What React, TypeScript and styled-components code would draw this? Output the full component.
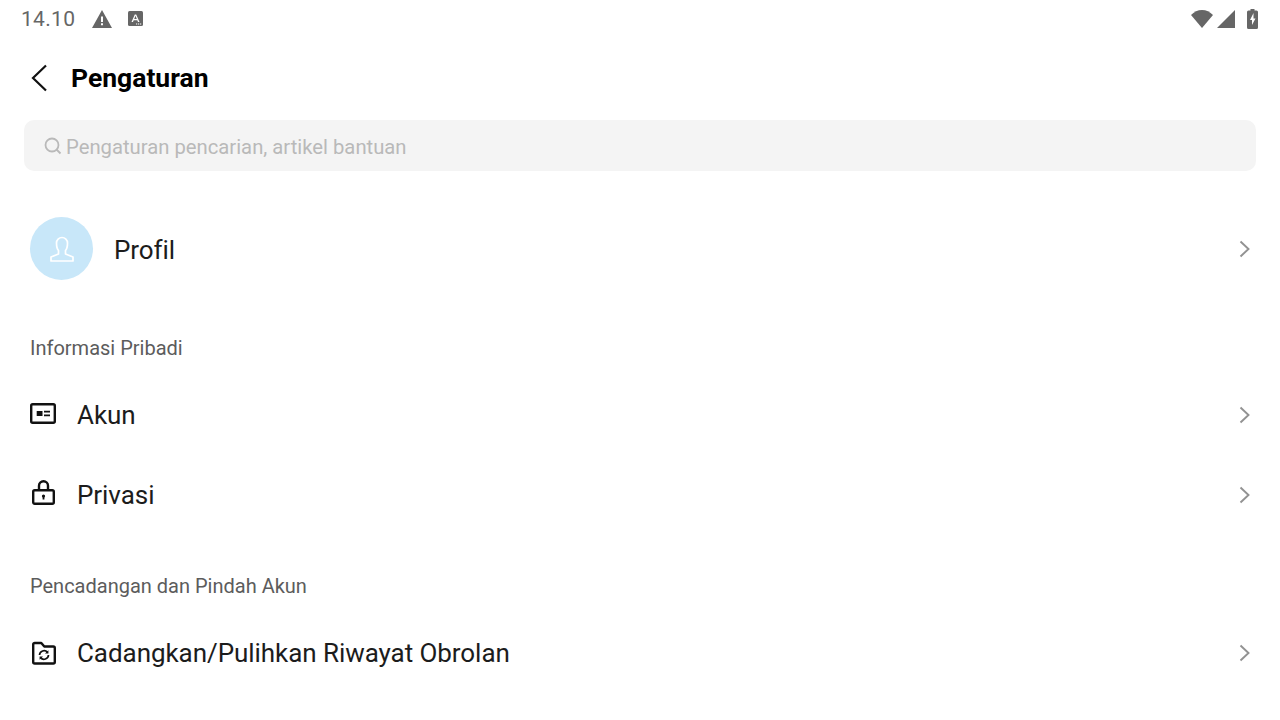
import React from 'react';
import styled, { createGlobalStyle } from 'styled-components';

const GlobalStyle = createGlobalStyle`
  html, body {
    margin: 0;
    padding: 0;
    background: #fff;
    overflow: hidden;
  }
  body {
    font-family: Roboto, "Liberation Sans", sans-serif;
  }
`;

const Page = styled.div`
  width: 1280px;
  height: 720px;
  overflow: hidden;
  display: flex;
  flex-direction: column;
`;

const StatusBar = styled.div`
  height: 37px;
  padding: 0 22px 0 21px;
  display: flex;
  align-items: center;
  justify-content: space-between;
  color: #666;
`;

const StatusGroup = styled.div`
  display: flex;
  align-items: center;
`;

const StatusIcon = styled.svg<{ $gap?: number }>`
  display: block;
  flex: none;
  margin-right: ${(p) => p.$gap ?? 0}px;
`;

const Time = styled.span`
  font-size: 21px;
  letter-spacing: 0.3px;
  margin-right: 17px;
`;

const Header = styled.div`
  height: 83px;
  padding: 0 0 2px 30px;
  box-sizing: border-box;
  display: flex;
  align-items: center;
`;

const BackButton = styled.button`
  width: 41px;
  height: 32px;
  padding: 0;
  border: 0;
  background: none;
  display: flex;
  align-items: center;
`;

const Title = styled.h1`
  margin: 0;
  font-size: 26.5px;
  font-weight: 700;
  color: #000;
`;

const SearchBox = styled.div`
  height: 51px;
  margin: 0 24px;
  padding-left: 20px;
  border-radius: 10px;
  background: #f4f4f4;
  display: flex;
  align-items: center;
  gap: 4px;
  color: #b9b9b9;
  font-size: 20.25px;
`;

const SearchText = styled.span`
  position: relative;
  top: 1px;
`;

const ProfileRow = styled.div`
  height: 63px;
  margin-top: 46px;
  padding: 0 29px 0 30px;
  display: flex;
  align-items: center;
`;

const Avatar = styled.div`
  width: 63px;
  height: 63px;
  border-radius: 50%;
  background: #c8e7f9;
  display: flex;
  align-items: center;
  justify-content: center;
  margin-right: 21px;
`;

const SectionLabel = styled.div<{ $top: number }>`
  margin-top: ${(p) => p.$top}px;
  padding-left: 30px;
  height: 24px;
  line-height: 24px;
  font-size: 20px;
  color: #5c5c5c;
`;

const Row = styled.div<{ $top?: number }>`
  height: 80px;
  margin-top: ${(p) => p.$top ?? 0}px;
  padding: 0 29px 0 30px;
  display: flex;
  align-items: center;
`;

const RowIcon = styled.div`
  width: 47px;
  height: 26px;
  flex: none;
  display: flex;
  align-items: center;
`;

const RowLabel = styled.span`
  flex: 1;
  font-size: 26px;
  letter-spacing: -0.06px;
  color: #1c1c1c;
`;

const ProfileLabel = styled(RowLabel)`
  padding-top: 2px;
`;

const Chevron = () => (
  <svg width="12" height="18" viewBox="0 0 12 18" fill="none" stroke="#929292" strokeWidth="1.9">
    <path d="M1.500 1.500 9.500 9l-8 7.500" />
  </svg>
);

const AccountIcon = () => (
  <svg width="26" height="24" viewBox="0 0 26 24" fill="none">
    <rect x="1.200" y="1.200" width="23.600" height="18.600" rx="1.500" stroke="#111" strokeWidth="2.400" />
    <rect x="6.700" y="8" width="5.800" height="5" fill="#111" />
    <path d="M14 8.700h6M14 12.300h6" stroke="#111" strokeWidth="1.800" />
  </svg>
);

const LockIcon = () => (
  <svg width="26" height="30" viewBox="0 0 26 30" fill="none">
    <rect x="3.200" y="10.200" width="20.600" height="13.600" rx="1.500" stroke="#111" strokeWidth="2.400" />
    <path d="M9 10V5.700a4.500 4.500 0 0 1 9 0V10" stroke="#111" strokeWidth="2.400" />
    <path d="M13.500 15.500v4" stroke="#111" strokeWidth="1.800" />
    <circle cx="13.500" cy="16" r="1.600" fill="#111" />
  </svg>
);

const BackupIcon = () => (
  <svg width="27" height="24" viewBox="0 0 27 24" fill="none">
    <path
      d="M3.200 3.500a1.500 1.500 0 0 1 1.500-1.500h6.600l3 3.500h9a1.500 1.500 0 0 1 1.500 1.500v14a1.500 1.500 0 0 1-1.500 1.500H4.700a1.500 1.500 0 0 1-1.500-1.500z"
      stroke="#111"
      strokeWidth="2.400"
      strokeLinejoin="round"
    />
    <path d="M9.500 14a4.500 4.500 0 0 1 8-2.600M18.500 14a4.500 4.500 0 0 1-8 2.600" stroke="#111" strokeWidth="1.700" />
    <path d="M18.400 9.200v3.400H15zM9.600 18.800v-3.400H13z" fill="#111" />
  </svg>
);

const rows = {
  personal: [
    { label: 'Akun', icon: <AccountIcon /> },
    { label: 'Privasi', icon: <LockIcon /> },
  ],
  backup: [{ label: 'Cadangkan/Pulihkan Riwayat Obrolan', icon: <BackupIcon /> }],
};

export default function App() {
  return (
    <Page>
      <GlobalStyle />
      <StatusBar>
        <StatusGroup>
          <Time>14.10</Time>
          <StatusIcon $gap={16} width="20" height="18" viewBox="0 0 20 18">
            <path fillRule="evenodd" d="M10 0 20 18H0zM9 6.500v5.500h2V6.500zM9 13.200v2h2v-2z" fill="#666" />
          </StatusIcon>
          <StatusIcon width="15" height="15" viewBox="0 0 15 15">
            <rect width="15" height="15" rx="1.500" fill="#666" />
            <path d="M3.500 11 6.800 3.500h1.400l3.300 7.500H10l-.7-1.800H5.700L5 11zM6.200 7.900h2.600L7.500 4.800z" fill="#fff" />
            <path d="M8 12.500h1.200v1H8zM10 12.500h1.200v1H10zM12 12.500h1.200v1H12z" fill="#fff" />
          </StatusIcon>
        </StatusGroup>
        <StatusGroup>
          <StatusIcon $gap={4} width="22" height="18" viewBox="0 0 22 18">
            <path d="M0 5C3 1.900 6.800 0 11 0s8 1.900 11 5L11 18z" fill="#666" />
          </StatusIcon>
          <StatusIcon $gap={12} width="18" height="18" viewBox="0 0 18 18">
            <path d="M18 0v18H0z" fill="#666" />
          </StatusIcon>
          <StatusIcon width="11" height="20" viewBox="0 0 11 20">
            <path
              fillRule="evenodd"
              d="M3.500 0h4v1.500h2A1.500 1.500 0 0 1 11 3v15.500a1.500 1.500 0 0 1-1.500 1.500h-8A1.500 1.500 0 0 1 0 18.500V3a1.500 1.500 0 0 1 1.500-1.500h2zM6.500 4 3 11h2v5l3.500-6.500h-2z"
              fill="#666"
            />
          </StatusIcon>
        </StatusGroup>
      </StatusBar>

      <Header>
        <BackButton>
          <svg width="18" height="28" viewBox="0 0 18 28" fill="none" stroke="#111" strokeWidth="2.200">
            <path d="M16 1.500 3 14l13 12.500" />
          </svg>
        </BackButton>
        <Title>Pengaturan</Title>
      </Header>

      <SearchBox>
        <svg width="18" height="18" viewBox="0 0 18 18" fill="none" stroke="#b9b9b9" strokeWidth="1.800">
          <circle cx="8" cy="8" r="6.500" />
          <path d="m12.500 12.500 4 4" />
        </svg>
        <SearchText>Pengaturan pencarian, artikel bantuan</SearchText>
      </SearchBox>

      <ProfileRow>
        <Avatar>
          <svg width="24" height="26" viewBox="0 0 24 26" fill="none" stroke="#fff" strokeWidth="1.700" strokeLinejoin="round">
            <path d="M1 25v-4l7.500-3v-3.500C7 13 6.500 11 6.500 7a5.500 5.500 0 0 1 11 0c0 4-.5 6-2 7.500V18l7.500 3v4z" />
          </svg>
        </Avatar>
        <ProfileLabel>Profil</ProfileLabel>
        <Chevron />
      </ProfileRow>

      <SectionLabel $top={56}>Informasi Pribadi</SectionLabel>
      {rows.personal.map((row, i) => (
        <Row key={row.label} $top={i === 0 ? 15 : 0}>
          <RowIcon>{row.icon}</RowIcon>
          <RowLabel>{row.label}</RowLabel>
          <Chevron />
        </Row>
      ))}

      <SectionLabel $top={39}>Pencadangan dan Pindah Akun</SectionLabel>
      {rows.backup.map((row) => (
        <Row key={row.label} $top={15}>
          <RowIcon>{row.icon}</RowIcon>
          <RowLabel>{row.label}</RowLabel>
          <Chevron />
        </Row>
      ))}
    </Page>
  );
}
